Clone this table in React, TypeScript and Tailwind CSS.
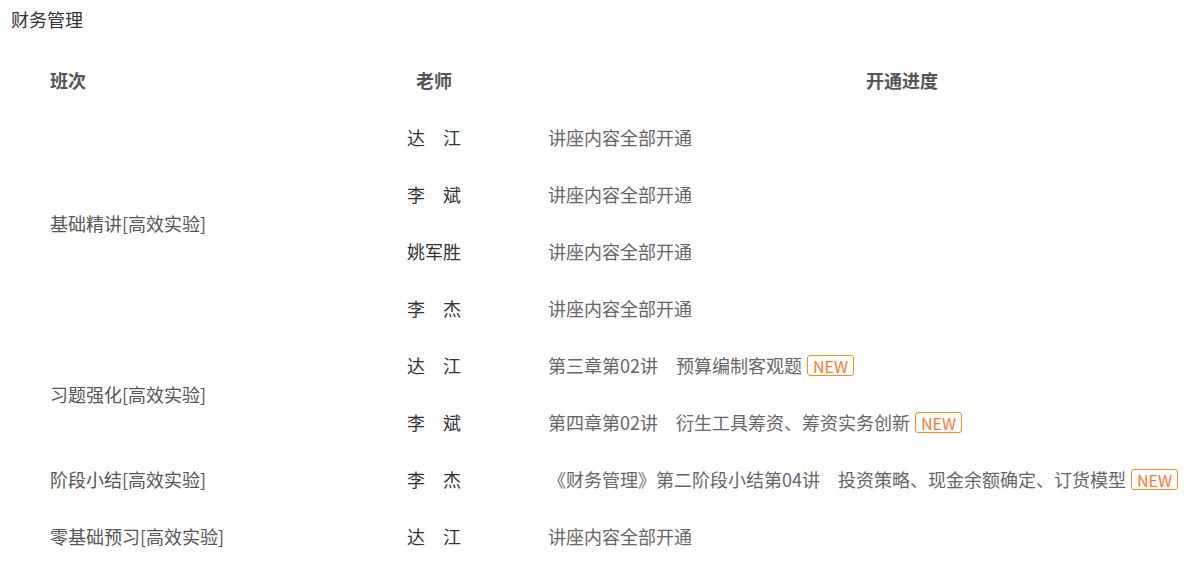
import React from "react";

type Row = { teacher: string; progress: string; isNew?: boolean };
type Group = { name: string; rows: Row[] };

const groups: Group[] = [
  {
    name: "基础精讲[高效实验]",
    rows: [
      { teacher: "达　江", progress: "讲座内容全部开通" },
      { teacher: "李　斌", progress: "讲座内容全部开通" },
      { teacher: "姚军胜", progress: "讲座内容全部开通" },
      { teacher: "李　杰", progress: "讲座内容全部开通" },
    ],
  },
  {
    name: "习题强化[高效实验]",
    rows: [
      { teacher: "达　江", progress: "第三章第02讲　预算编制客观题", isNew: true },
      { teacher: "李　斌", progress: "第四章第02讲　衍生工具筹资、筹资实务创新", isNew: true },
    ],
  },
  {
    name: "阶段小结[高效实验]",
    rows: [
      {
        teacher: "李　杰",
        progress: "《财务管理》第二阶段小结第04讲　投资策略、现金余额确定、订货模型",
        isNew: true,
      },
    ],
  },
  {
    name: "零基础预习[高效实验]",
    rows: [{ teacher: "达　江", progress: "讲座内容全部开通" }],
  },
];

export default function App() {
  return (
    <div
      className="w-[1187px] h-[572px] overflow-hidden bg-white text-[18px]"
      style={{ fontFamily: '"Noto Sans CJK SC", "Noto Sans", sans-serif' }}
    >
      <div className="h-[38px] flex items-center pl-[11px] text-[#333]">财务管理</div>
      <div className="mt-[13px]">
        <div className="flex h-[58px] items-center font-bold text-[#555]">
          <div className="w-[360px] pl-[50px]">班次</div>
          <div className="w-[148px] text-center">老师</div>
          <div className="flex-1 pl-[358px]">开通进度</div>
        </div>
        {groups.map((g) => (
          <div key={g.name} className="flex">
            <div className="w-[360px] pl-[50px] flex items-center text-[#555]">{g.name}</div>
            <div className="flex-1">
              {g.rows.map((r, i) => (
                <div key={i} className="flex h-[57px] items-center">
                  <div className="w-[148px] text-center text-[#333]">{r.teacher}</div>
                  <div className="flex-1 pl-[40px] flex items-center whitespace-nowrap text-[#666]">
                    <span>{r.progress}</span>
                    {r.isNew && (
                      <span className="ml-[5px] inline-flex items-center justify-center h-[21px] px-[5px] border border-[#ff8a1f] rounded-[3px] text-[#ff7a2f] text-[16px] leading-none">
                        NEW
                      </span>
                    )}
                  </div>
                </div>
              ))}
            </div>
          </div>
        ))}
      </div>
    </div>
  );
}
